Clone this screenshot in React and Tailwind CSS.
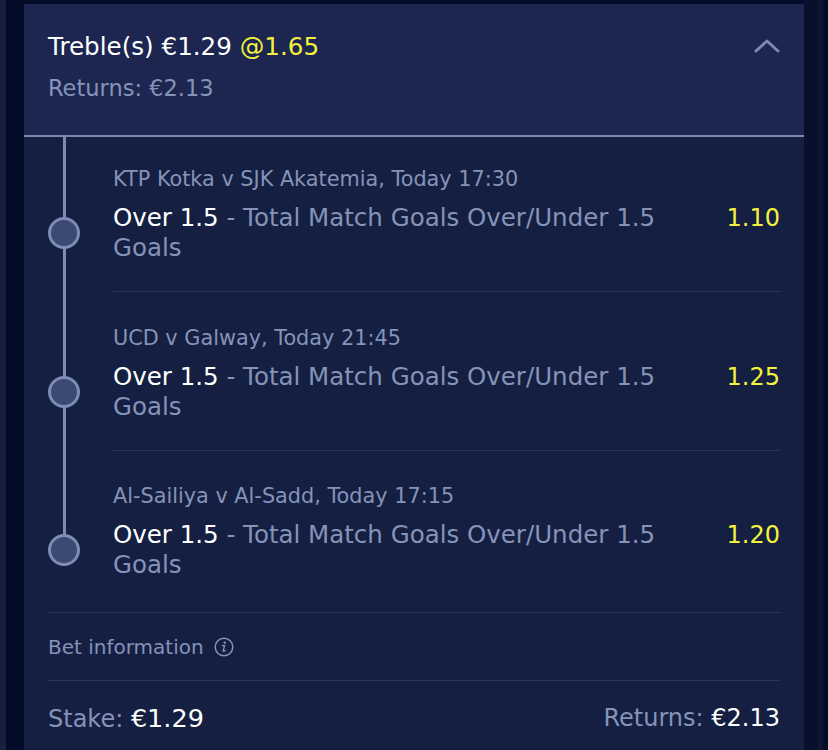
import React from 'react';

const selections = [
  { event: 'KTP Kotka v SJK Akatemia, Today 17:30', pick: 'Over 1.5', market: 'Total Match Goals Over/Under 1.5 Goals', odds: '1.10' },
  { event: 'UCD v Galway, Today 21:45', pick: 'Over 1.5', market: 'Total Match Goals Over/Under 1.5 Goals', odds: '1.25' },
  { event: 'Al-Sailiya v Al-Sadd, Today 17:15', pick: 'Over 1.5', market: 'Total Match Goals Over/Under 1.5 Goals', odds: '1.20' },
];

const SelectionRow = ({ sel, first, last }) => {
  const pt = first ? 'pt-[30px]' : last ? 'pt-[33px]' : 'pt-[34px]';
  const spacer = first ? 'h-[66px]' : last ? 'h-[69px]' : 'h-[70px]';
  return (
    <div className="flex">
      <div className="relative w-8 ml-6 mr-[33px] shrink-0">
        <div className={'absolute left-[14.5px] top-0 w-[3px] bg-[#7e8cb3] ' + (last ? 'h-[99px]' : 'bottom-0')} />
        <div className={spacer} />
        <div className="relative h-[60px] flex items-center">
          <div className="w-8 h-8 rounded-full bg-[#3a4a72] border-[3px] border-[#7e8cb3]" />
        </div>
      </div>
      <div className={'flex-1 mr-6 ' + pt + (last ? ' pb-[32px]' : ' pb-[28px] border-b border-[#2a3559]')}>
        <div className="text-[20.8px] leading-[24px] text-[#8593b8]">{sel.event}</div>
        <div className="mt-3 flex items-start justify-between">
          <div className="text-[24.5px] leading-[30px] text-[#8593b8] max-w-[570px]">
            <span className="text-white">{sel.pick}</span> - {sel.market}
          </div>
          <div className="text-[24px] leading-[30px] text-[#f2f23d]">{sel.odds}</div>
        </div>
      </div>
    </div>
  );
};

const App = () => {
  return (
    <div className="h-screen overflow-hidden flex bg-[#020b27]" style={{ fontFamily: '"DejaVu Sans", Verdana, sans-serif' }}>
      <div className="w-[6px] shrink-0 bg-[#161f3e]" />
      <div className="w-[18px] shrink-0" />
      <div className="w-[780px] shrink-0 mt-1 bg-[#141f42]">
        <div className="bg-[#1c2650] border-b-2 border-[#7b89b0] px-6 pt-[28px] pb-[33px] flex justify-between">
          <div>
            <div className="text-[24.6px] leading-[30px] text-white">
              Treble(s) €1.29 <span className="text-[#f2f23d]">@1.65</span>
            </div>
            <div className="mt-3 text-[22.5px] leading-[28px] text-[#8593b8]">Returns: €2.13</div>
          </div>
          <svg width="26" height="16" viewBox="0 0 26 16" className="mt-[6px]">
            <polyline points="2,13 13,3 24,13" fill="none" stroke="#7d8ab0" strokeWidth="3" strokeLinecap="round" strokeLinejoin="round" />
          </svg>
        </div>
        {selections.map((sel, i) => (
          <SelectionRow key={i} sel={sel} first={i === 0} last={i === selections.length - 1} />
        ))}
        <div className="mx-6 border-t border-[#2a3559] pt-[22px] pb-[21px] flex items-center gap-[10px] text-[20px] leading-[24px] text-[#8593b8]">
          <span>Bet information</span>
          <svg width="20" height="20" viewBox="0 0 20 20">
            <circle cx="10" cy="10" r="8.8" fill="none" stroke="#8593b8" strokeWidth="1.5" />
            <circle cx="10.8" cy="5.6" r="1.2" fill="#8593b8" />
            <path d="M8.4 8.6 L10.6 8.4 L9.2 13.6 Q9 14.5 10 14.2 L11.2 13.6" fill="none" stroke="#8593b8" strokeWidth="1.4" strokeLinecap="round" strokeLinejoin="round" />
          </svg>
        </div>
        <div className="mx-6 border-t border-[#2a3559] pt-[22px] flex justify-between text-[24px] leading-[30px]">
          <div className="text-[#8593b8]">Stake: <span className="text-white text-[25.5px]">€1.29</span></div>
          <div className="text-[#8593b8]">Returns: <span className="text-white">€2.13</span></div>
        </div>
      </div>
      <div className="w-[14px] shrink-0 bg-[#07112e]" />
      <div className="w-[5px] shrink-0 bg-[#0c1633]" />
      <div className="flex-1" />
    </div>
  );
};

export default App;
